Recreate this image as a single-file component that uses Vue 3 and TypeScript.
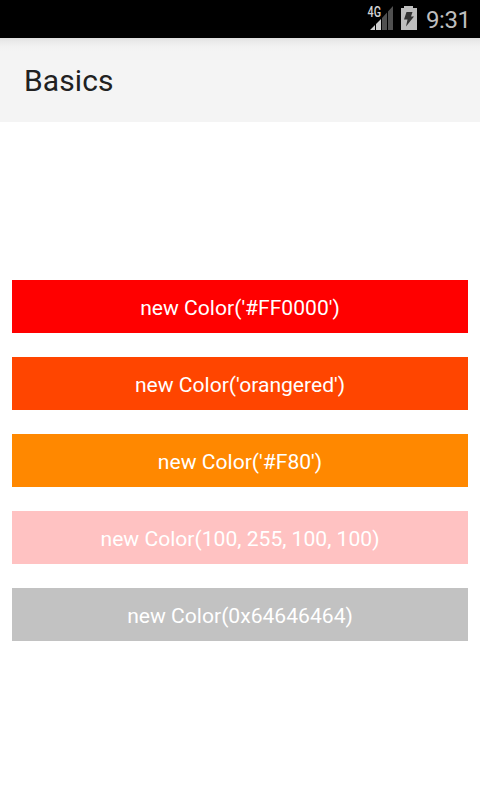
<script setup lang="ts">
interface Swatch { label: string; color: string }
const swatches: Swatch[] = [
  { label: "new Color('#FF0000')", color: '#ff0000' },
  { label: "new Color('orangered')", color: '#ff4500' },
  { label: "new Color('#F80')", color: '#ff8800' },
  { label: 'new Color(100, 255, 100, 100)', color: '#ffc2c2' },
  { label: 'new Color(0x64646464)', color: '#c2c2c2' },
]
</script>

<template>
  <div class="screen">
    <div class="status">
      <svg class="icons" width="54" height="38" viewBox="366 0 54 38">
        <path d="M370 30 L375 25 V30Z M376 24 L381 19 V30 H376Z" fill="#cfcfcf" />
        <path d="M382 18 L387 12.5 V30 H382Z M388 11.5 L393 6 V30 H388Z" fill="#505050" />
        <text class="net" x="367.5" y="17" textLength="13.5" lengthAdjust="spacingAndGlyphs">4G</text>
        <path d="M401 8h3V6h9v2h4v22h-16z" fill="#bebebe" />
        <path d="M406.500 12h6l-1.500 4.500h3l-8 10 1.500-7h-3.500z" fill="#333" />
      </svg>
      <span class="clock">9:31</span>
    </div>
    <header class="bar"><span class="title">Basics</span></header>
    <main class="list">
      <div v-for="s in swatches" :key="s.label" class="swatch" :style="{ background: s.color }">{{ s.label }}</div>
    </main>
  </div>
</template>

<style>
body { margin: 0; background: #fff; }
</style>
<style scoped>
.screen { width: 480px; height: 800px; display: flex; flex-direction: column; font-family: Roboto, sans-serif; background: #fff; overflow: hidden; }
.status { height: 38px; background: #000; display: flex; justify-content: flex-end; padding-right: 9px; gap: 6px; box-sizing: border-box; }
.net { font-size: 14px; font-weight: 500; fill: #d4d4d4; stroke: #000; stroke-width: 1.6px; paint-order: stroke; }
.clock { width: 45px; font-size: 24px; line-height: 40px; letter-spacing: -0.4px; color: #bebebe; }
.bar { height: 84px; background: linear-gradient(#dfdfdf, #e9e9e9 3px, #f1f1f1 8px, #f4f4f4 13px); display: flex; align-items: center; padding-left: 24px; }
.title { font-size: 30px; letter-spacing: 0.1px; color: #212121; }
.list { flex: 1; display: flex; flex-direction: column; justify-content: center; gap: 24px; padding: 0 12px 2px; }
.swatch { height: 53px; line-height: 55px; text-align: center; color: #fff; font-size: 21.1px; white-space: nowrap; }
</style>
